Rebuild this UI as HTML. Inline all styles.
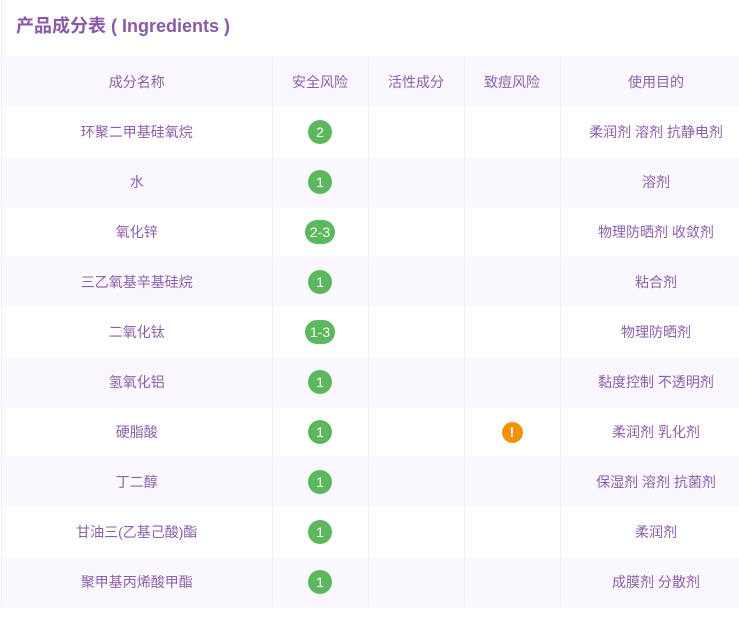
<!DOCTYPE html>
<html><head><meta charset="utf-8"><style>
body{margin:0;background:#fff;font-family:"Liberation Sans","Noto Sans CJK SC",sans-serif;color:#8e5fa8;width:739px;height:617px;overflow:hidden;position:relative}
.wrap{position:absolute;left:1px;top:0;width:750px;border-left:1px solid #f0eef3}
h1{margin:0;height:57px;line-height:52px;font-size:18px;font-weight:bold;color:#8a5aa8;padding-left:14px}
table{border-collapse:collapse;table-layout:fixed;width:750px;font-size:14px}
td{height:50px;padding:0;text-align:center;border-right:1px solid #f1eff4;white-space:nowrap;overflow:hidden}
tr:nth-child(odd){background:#faf8fe}
tr:nth-child(even){background:#fff}
.b{display:inline-block;background:#5cb85c;color:#fff;border-radius:12px;min-width:24px;height:24px;line-height:24px;font-size:14px;box-sizing:border-box;padding:0 5px;vertical-align:middle}
.w{display:inline-block;width:21px;height:21px;border-radius:50%;background:#f39200;color:#fff;font-weight:bold;line-height:21px;font-size:14px;vertical-align:middle}
</style></head><body><div class="wrap">
<h1>产品成分表 ( Ingredients )</h1>
<table>
<col style="width:270px"><col style="width:96px"><col style="width:96px"><col style="width:96px"><col style="width:192px">
<tr><td>成分名称</td><td>安全风险</td><td>活性成分</td><td>致痘风险</td><td>使用目的</td></tr>
<tr><td>环聚二甲基硅氧烷</td><td><span class="b">2</span></td><td></td><td></td><td>柔润剂 溶剂 抗静电剂</td></tr>
<tr><td>水</td><td><span class="b">1</span></td><td></td><td></td><td>溶剂</td></tr>
<tr><td>氧化锌</td><td><span class="b">2-3</span></td><td></td><td></td><td>物理防晒剂 收敛剂</td></tr>
<tr><td>三乙氧基辛基硅烷</td><td><span class="b">1</span></td><td></td><td></td><td>粘合剂</td></tr>
<tr><td>二氧化钛</td><td><span class="b">1-3</span></td><td></td><td></td><td>物理防晒剂</td></tr>
<tr><td>氢氧化铝</td><td><span class="b">1</span></td><td></td><td></td><td>黏度控制 不透明剂</td></tr>
<tr><td>硬脂酸</td><td><span class="b">1</span></td><td></td><td><span class="w">!</span></td><td>柔润剂 乳化剂</td></tr>
<tr><td>丁二醇</td><td><span class="b">1</span></td><td></td><td></td><td>保湿剂 溶剂 抗菌剂</td></tr>
<tr><td>甘油三(乙基己酸)酯</td><td><span class="b">1</span></td><td></td><td></td><td>柔润剂</td></tr>
<tr><td>聚甲基丙烯酸甲酯</td><td><span class="b">1</span></td><td></td><td></td><td>成膜剂 分散剂</td></tr>
</table></div></body></html>
